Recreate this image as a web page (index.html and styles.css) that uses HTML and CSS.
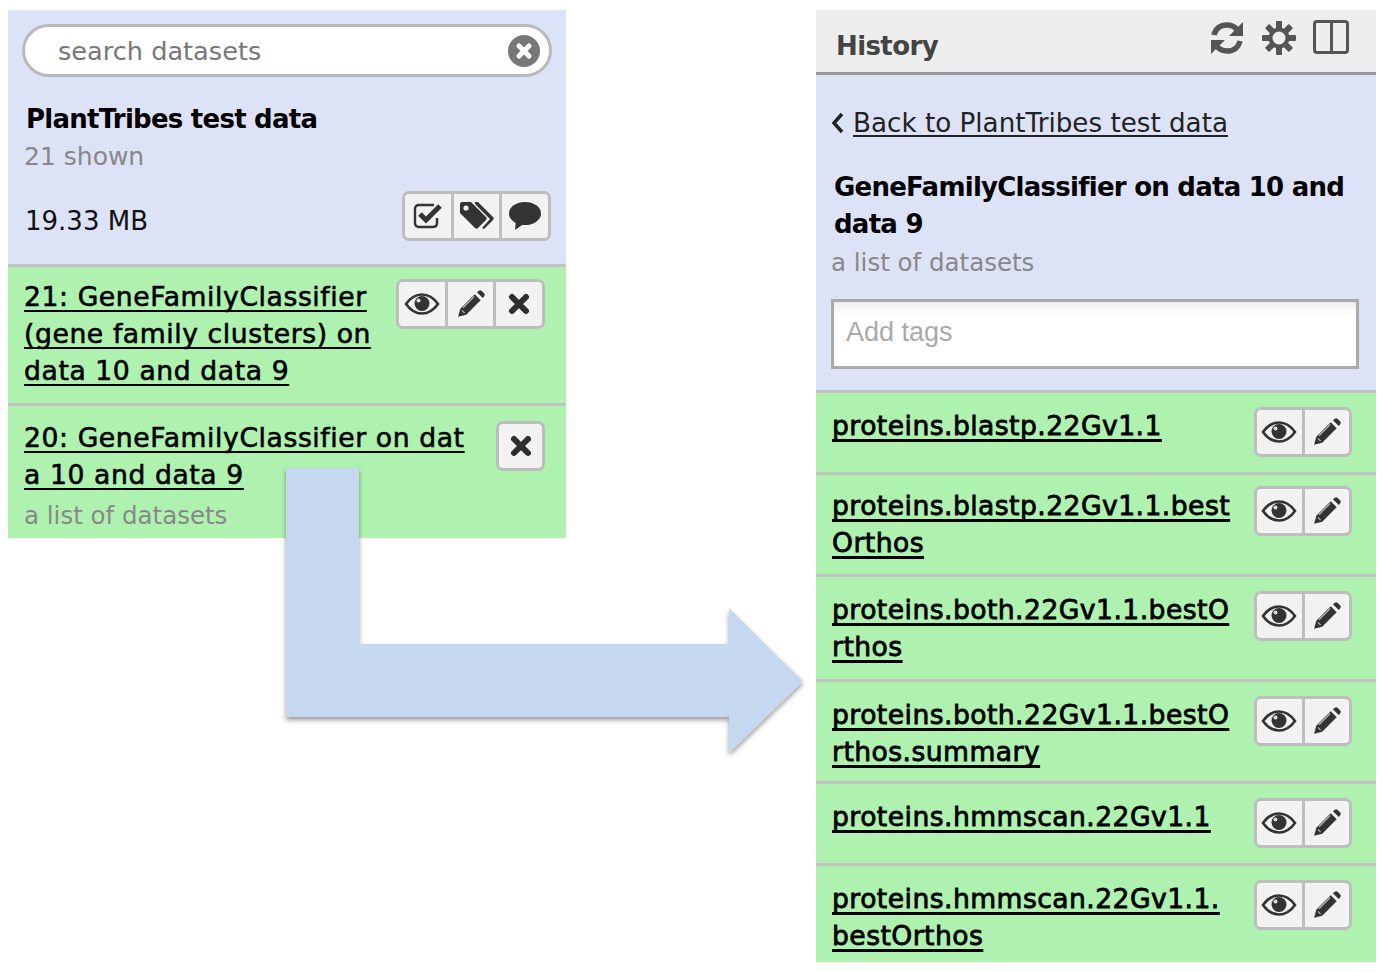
FILE: index.html
```html
<!DOCTYPE html>
<html lang="en">
<head>
    <meta charset="UTF-8">
    <meta name="viewport" content="width=device-width, initial-scale=1.0">
    <title>PlantTribes test data</title>
    <link rel="stylesheet" href="styles.css">
</head>
<body>
    <svg width="0" height="0" class="defs">
        <symbol id="i-eye" viewBox="0 0 36 24">
            <path d="M2 12C7 5 12 2.500 18 2.500S29 5 34 12C29 19 24 21.500 18 21.500S7 19 2 12Z" fill="none" stroke="#333" stroke-width="2.600"/>
            <circle cx="18" cy="11.500" r="7.500" fill="#333"/>
            <circle cx="14.500" cy="8.500" r="2" fill="#ddd"/>
        </symbol>
        <symbol id="i-pencil" viewBox="0 0 28 28">
            <path d="M2 26L4 18.500L17.500 5L23 10.500L9.500 24Z" fill="#333"/>
            <path d="M19.500 3L21 1.800C22 1 23.200 1 24 1.800L26.200 4C27 4.800 27 6 26.200 7L25 8.500Z" fill="#333"/>
            <path d="M6.500 17.500L17 7M5.500 20L8 22.500" stroke="#bbb" stroke-width="1" fill="none"/>
        </symbol>
        <symbol id="i-times" viewBox="0 0 24 24">
            <path d="M5 5L19 19M19 5L5 19" stroke="#2e2e2e" stroke-width="6" stroke-linecap="round" fill="none"/>
        </symbol>
        <symbol id="i-check" viewBox="0 0 30 30">
            <path d="M24 17V22C24 24.500 22.500 26 20 26H6C3.500 26 2 24.500 2 22V8C2 5.500 3.500 4 6 4H21" fill="none" stroke="#333" stroke-width="2.400"/>
            <path d="M7 13L13 19L27 5" fill="none" stroke="#333" stroke-width="5"/>
        </symbol>
        <symbol id="i-tags" viewBox="0 0 36 30">
            <path d="M1 3C1 2 2 1 3 1H12L27 16C28 17 28 18 27 19L19 27C18 28 17 28 16 27L1 12Z" fill="#333"/>
            <circle cx="7" cy="7" r="2.600" fill="#eee"/>
            <path d="M16 1H19L34 16C35 17 35 18 34 19L25 28L23 27L31 18L16 3Z" fill="#333"/>
        </symbol>
        <symbol id="i-comment" viewBox="0 0 34 30">
            <ellipse cx="17" cy="12.500" rx="16" ry="11.500" fill="#333"/>
            <path d="M8 19L7 29L17 22Z" fill="#333"/>
        </symbol>
        <symbol id="i-refresh" viewBox="0 0 36 36">
            <path d="M5 15C6.500 8.500 11.500 5 18 5C22.500 5 26 7 28.500 10" fill="none" stroke="#555" stroke-width="5.500"/>
            <path d="M34 2V16H20Z" fill="#555"/>
            <path d="M31 21C29.500 27.500 24.500 31 18 31C13.500 31 10 29 7.500 26" fill="none" stroke="#555" stroke-width="5.500"/>
            <path d="M2 34V20H16Z" fill="#555"/>
        </symbol>
        <symbol id="i-gear" viewBox="0 0 36 36">
            <g fill="#555">
                <rect x="15" y="1" width="6" height="34" rx="1"/>
                <rect x="15" y="1" width="6" height="34" rx="1" transform="rotate(45 18 18)"/>
                <rect x="15" y="1" width="6" height="34" rx="1" transform="rotate(90 18 18)"/>
                <rect x="15" y="1" width="6" height="34" rx="1" transform="rotate(135 18 18)"/>
            </g>
            <circle cx="18" cy="18" r="10.500" fill="#555"/>
            <circle cx="18" cy="18" r="6.500" fill="#eee"/>
        </symbol>
    </svg>

    <div class="page">
        <section class="panel panel-left">
            <div class="info">
                <div class="search">
                    <span class="search-text">search datasets</span>
                    <span class="search-clear">
                        <svg width="20" height="20"><path d="M5 5L15 15M15 5L5 15" stroke="#fff" stroke-width="5" stroke-linecap="round"/></svg>
                    </span>
                </div>
                <div class="name name-plant">PlantTribes test data</div>
                <div class="muted shown">21 shown</div>
                <div class="size-row">
                    <span class="size">19.33 MB</span>
                    <div class="actions">
                        <span class="act"><svg class="ic-check"><use href="#i-check"/></svg></span>
                        <span class="act"><svg class="ic-tags"><use href="#i-tags"/></svg></span>
                        <span class="act"><svg class="ic-comment"><use href="#i-comment"/></svg></span>
                    </div>
                </div>
            </div>
            <div class="row row-a">
                <a class="link">21: GeneFamilyClassifier<br>(gene family clusters) on<br>data 10 and data 9</a>
                <div class="actions">
                    <span class="act"><svg class="ic-eye"><use href="#i-eye"/></svg></span>
                    <span class="act"><svg class="ic-pencil"><use href="#i-pencil"/></svg></span>
                    <span class="act"><svg class="ic-times"><use href="#i-times"/></svg></span>
                </div>
            </div>
            <div class="row row-b">
                <div>
                    <a class="link">20: GeneFamilyClassifier on dat<br>a 10 and data 9</a>
                    <div class="muted row-sub">a list of datasets</div>
                </div>
                <div class="actions">
                    <span class="act"><svg class="ic-times"><use href="#i-times"/></svg></span>
                </div>
            </div>
        </section>

        <section class="panel panel-right">
            <div class="history-bar">
                <span class="history-title">History</span>
                <div class="history-icons">
                    <svg class="ic-refresh"><use href="#i-refresh"/></svg>
                    <svg class="ic-gear"><use href="#i-gear"/></svg>
                    <span class="ic-columns"></span>
                </div>
            </div>
            <div class="info info-right">
                <div class="back">
                    <svg class="chevron" viewBox="0 0 14 22"><path d="M11 2L3 11L11 20" fill="none" stroke="#222" stroke-width="3.500"/></svg>
                    <a class="back-link">Back to PlantTribes test data</a>
                </div>
                <div class="name name-gene">GeneFamilyClassifier on data 10 and<br>data 9</div>
                <div class="muted list-note">a list of datasets</div>
                <div class="tags">Add tags</div>
            </div>
            <div class="row file file-one">
                <a class="link link-file">proteins.blastp.22Gv1.1</a>
                <div class="actions">
                    <span class="act"><svg class="ic-eye"><use href="#i-eye"/></svg></span>
                    <span class="act"><svg class="ic-pencil"><use href="#i-pencil"/></svg></span>
                </div>
            </div>
            <div class="row file file-up">
                <a class="link link-file">proteins.blastp.22Gv1.1.best<br>Orthos</a>
                <div class="actions">
                    <span class="act"><svg class="ic-eye"><use href="#i-eye"/></svg></span>
                    <span class="act"><svg class="ic-pencil"><use href="#i-pencil"/></svg></span>
                </div>
            </div>
            <div class="row file file-tall">
                <a class="link link-file">proteins.both.22Gv1.1.bestO<br>rthos</a>
                <div class="actions">
                    <span class="act"><svg class="ic-eye"><use href="#i-eye"/></svg></span>
                    <span class="act"><svg class="ic-pencil"><use href="#i-pencil"/></svg></span>
                </div>
            </div>
            <div class="row file">
                <a class="link link-file">proteins.both.22Gv1.1.bestO<br>rthos.summary</a>
                <div class="actions">
                    <span class="act"><svg class="ic-eye"><use href="#i-eye"/></svg></span>
                    <span class="act"><svg class="ic-pencil"><use href="#i-pencil"/></svg></span>
                </div>
            </div>
            <div class="row file file-one">
                <a class="link link-file">proteins.hmmscan.22Gv1.1</a>
                <div class="actions">
                    <span class="act"><svg class="ic-eye"><use href="#i-eye"/></svg></span>
                    <span class="act"><svg class="ic-pencil"><use href="#i-pencil"/></svg></span>
                </div>
            </div>
            <div class="row file file-last">
                <a class="link link-file">proteins.hmmscan.22Gv1.1.<br>bestOrthos</a>
                <div class="actions">
                    <span class="act"><svg class="ic-eye"><use href="#i-eye"/></svg></span>
                    <span class="act"><svg class="ic-pencil"><use href="#i-pencil"/></svg></span>
                </div>
            </div>
        </section>
    </div>

    <!-- the big arrow sits over the left panel -->
    <svg class="arrow" width="1382" height="972">
        <defs>
            <filter id="arrow-shadow" x="-5%" y="-5%" width="110%" height="110%">
                <feDropShadow dx="0" dy="3" stdDeviation="2.500" flood-color="#000" flood-opacity="0.4"/>
            </filter>
        </defs>
        <polygon points="286,468 359,468 359,644 729,644 729,608 803,681 729,753 729,717 286,717" fill="#c6d8f0" filter="url(#arrow-shadow)"/>
    </svg>
</body>
</html>
```

FILE: styles.css
```css
html, body {
    margin: 0;
    padding: 0;
    background-color: #fff;
}

body {
    font-family: "DejaVu Sans", sans-serif;
    font-size: 25px;
    color: #111;
    height: 972px;
    overflow: hidden;
}

.defs {
    display: block;
    height: 0;
}

.page {
    display: flex;
    align-items: flex-start;
    gap: 250px;
    padding: 10px 0 0 8px;
}

.panel {
    flex: none;
}

.panel-left {
    width: 558px;
}

.panel-right {
    width: 560px;
    height: 952px;
    overflow: hidden;
}

.info {
    background-color: #dde3f7;
}

.panel-left .info {
    padding: 14px 14px 0;
    height: 240px;
}

.search {
    display: flex;
    align-items: center;
    justify-content: space-between;
    box-sizing: border-box;
    height: 53px;
    background-color: #fff;
    border: 3px solid #b9b9b9;
    border-radius: 27px;
    padding: 0 9px 0 33px;
}

.search-text {
    color: #777;
    font-size: 25.6px;
}

.search-clear {
    display: flex;
    align-items: center;
    justify-content: center;
    width: 32px;
    height: 32px;
    border-radius: 50%;
    background-color: #777;
}

.name {
    font-size: 26px;
    font-weight: bold;
    letter-spacing: -0.75px;
    color: #000;
    line-height: 37px;
}

.name-plant {
    margin: 24px 0 0 4px;
}

.muted {
    color: #888;
    font-size: 24.5px;
}

.shown {
    margin: 2px 0 0 2px;
    font-size: 25px;
    line-height: 34px;
}

.size-row {
    display: flex;
    align-items: center;
    justify-content: space-between;
    margin: 17px 1px 0 0;
}

.size {
    margin: 10px 0 0 3px;
    font-size: 26px;
}

.actions {
    display: flex;
    flex: none;
    height: 50px;
    box-sizing: border-box;
    background-color: #f2f2f2;
    border: 3px solid #bdbdbd;
    border-radius: 7px;
}

.act {
    display: flex;
    align-items: center;
    justify-content: center;
    width: 45.6px;
}

.act + .act {
    border-left: 3px solid #bdbdbd;
}

.ic-check { width: 30px; height: 30px; }
.ic-tags { width: 36px; height: 30px; }
.ic-comment { width: 34px; height: 30px; }
.ic-eye { width: 36px; height: 24px; }
.ic-pencil { width: 30px; height: 30px; }
.ic-times { width: 24px; height: 24px; }
.ic-refresh { width: 36px; height: 36px; }
.ic-gear { width: 36px; height: 36px; }

.row {
    display: flex;
    justify-content: space-between;
    align-items: flex-start;
    background-color: #aff2b0;
    border-top: 3px solid #c2c2c2;
}

.row-a {
    height: 136px;
    padding: 0 21px 0 16px;
}

.row-b {
    height: 132px;
    padding: 0 21px 0 16px;
}

.row-a .actions {
    margin-top: 12px;
}

.row-b .actions {
    margin-top: 15px;
}

.row-b .act {
    width: 43px;
}

.link {
    display: block;
    font-size: 26.6px;
    letter-spacing: 0.6px;
    line-height: 37px;
    color: #000;
    text-decoration: underline;
    text-decoration-thickness: 2px;
    text-underline-offset: 4px;
    text-decoration-skip-ink: none;
    white-space: nowrap;
    -webkit-text-stroke: 0.6px #000;
}

.row-a .link {
    margin-top: 11px;
}

.row-b .link {
    margin-top: 13px;
}

.row-sub {
    line-height: 40px;
    margin-top: 3px;
}

.history-bar {
    display: flex;
    justify-content: space-between;
    box-sizing: border-box;
    height: 65px;
    background-color: #eee;
    border-bottom: 3px solid #999;
    padding: 10px 27px 0 20px;
}

.history-title {
    font-size: 26px;
    font-weight: bold;
    letter-spacing: -0.6px;
    color: #444;
    margin-top: 11px;
}

.history-icons {
    display: flex;
    align-items: flex-start;
    gap: 16px;
}

.ic-columns {
    box-sizing: border-box;
    width: 36px;
    height: 34px;
    border: 3px solid #555;
    border-radius: 4px;
    background: linear-gradient(#555, #555) center / 3px 100% no-repeat;
}

.info-right {
    height: 315px;
    box-sizing: border-box;
    padding: 33px 17px 0 15px;
}

.back {
    display: flex;
    align-items: center;
    gap: 8px;
}

.chevron {
    width: 14px;
    height: 22px;
}

.back-link {
    font-size: 26.2px;
    color: #222;
    text-decoration: underline;
    text-decoration-thickness: 2px;
    text-underline-offset: 3px;
    text-decoration-skip-ink: none;
}

.name-gene {
    margin: 31px 0 0 3px;
}

.list-note {
    margin-top: 3px;
    line-height: 34px;
}

.tags {
    box-sizing: border-box;
    height: 70px;
    margin-top: 19px;
    padding: 0 12px;
    line-height: 60px;
    font-family: "Liberation Sans", sans-serif;
    font-size: 27px;
    color: #aaa;
    background: linear-gradient(#eee, #fff 14px);
    border: 3px solid #aaa;
}

.file {
    height: 99px;
    padding: 0 24px 0 16px;
}

.file-one {
    height: 79px;
}

.file-tall {
    height: 102px;
}

.file-last {
    height: 110px;
}

.file .actions {
    margin-top: 14px;
}

.file-up .actions {
    margin-top: 11px;
}

.file .act {
    width: 44.5px;
}

.link-file {
    margin-top: 14px;
    letter-spacing: 0.45px;
    text-decoration-thickness: 3px;
    -webkit-text-stroke: 0.8px #000;
}

.file-up .link-file {
    margin-top: 12px;
}

.arrow {
    position: absolute;
    top: 0;
    left: 0;
    pointer-events: none;
}
```
